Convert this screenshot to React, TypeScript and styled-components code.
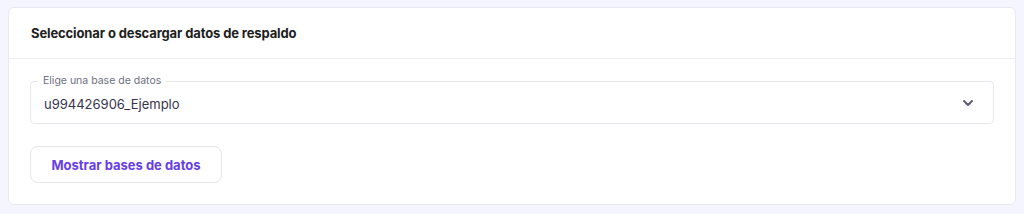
import React from "react";
import styled, { createGlobalStyle } from "styled-components";

const GlobalStyle = createGlobalStyle`
  html, body {
    margin: 0;
    padding: 0;
    background: #f4f5ff;
    font-family: Inter, "Noto Sans", sans-serif;
  }
`;

const Page = styled.div`
  padding: 7px 8px 8px 8px;
  height: 214px;
  box-sizing: border-box;
`;

const Card = styled.div`
  background: #fff;
  border: 1px solid #e9e9f2;
  border-radius: 6px;
  box-sizing: border-box;
  height: 198px;
`;

const Header = styled.div`
  height: 50px;
  display: flex;
  align-items: center;
  padding: 0 22px;
  border-bottom: 1px solid #ececf2;
  font-size: 13px;
  font-weight: 700;
  letter-spacing: -0.12px;
  color: #1d1e20;
`;

const Body = styled.div`
  padding: 22px 21px 0 21px;
`;

const Field = styled.div`
  position: relative;
  height: 43px;
  border: 1px solid #e5e5ec;
  border-radius: 4px;
  box-sizing: border-box;
  display: flex;
  align-items: center;
  padding: 0 17px 0 13px;
`;

const Label = styled.span`
  position: absolute;
  top: -8px;
  left: 7px;
  padding: 0 5px;
  background: #fff;
  font-size: 10.5px;
  line-height: 14px;
  color: #6d7081;
`;

const Value = styled.span`
  flex: 1;
  font-size: 13px;
  color: #36344d;
  padding-top: 2px;
`;

const Chevron = styled.svg`
  width: 16px;
  height: 16px;
  color: #5a5b6f;
`;

const Button = styled.button`
  margin-top: 22px;
  height: 37px;
  width: 192px;
  border: 1px solid #e5e5ec;
  border-radius: 8px;
  background: #fff;
  font-family: inherit;
  font-size: 13px;
  font-weight: 700;
  color: #673de6;
  cursor: pointer;
`;

export default function App() {
  return (
    <>
      <GlobalStyle />
      <Page>
        <Card>
          <Header>Seleccionar o descargar datos de respaldo</Header>
          <Body>
            <Field>
              <Label>Elige una base de datos</Label>
              <Value>u994426906_Ejemplo</Value>
              <Chevron viewBox="0 0 24 24" fill="none" stroke="currentColor" strokeWidth="3" strokeLinecap="round" strokeLinejoin="round">
                <path d="M6 9l6 6 6-6" />
              </Chevron>
            </Field>
            <Button>Mostrar bases de datos</Button>
          </Body>
        </Card>
      </Page>
    </>
  );
}
